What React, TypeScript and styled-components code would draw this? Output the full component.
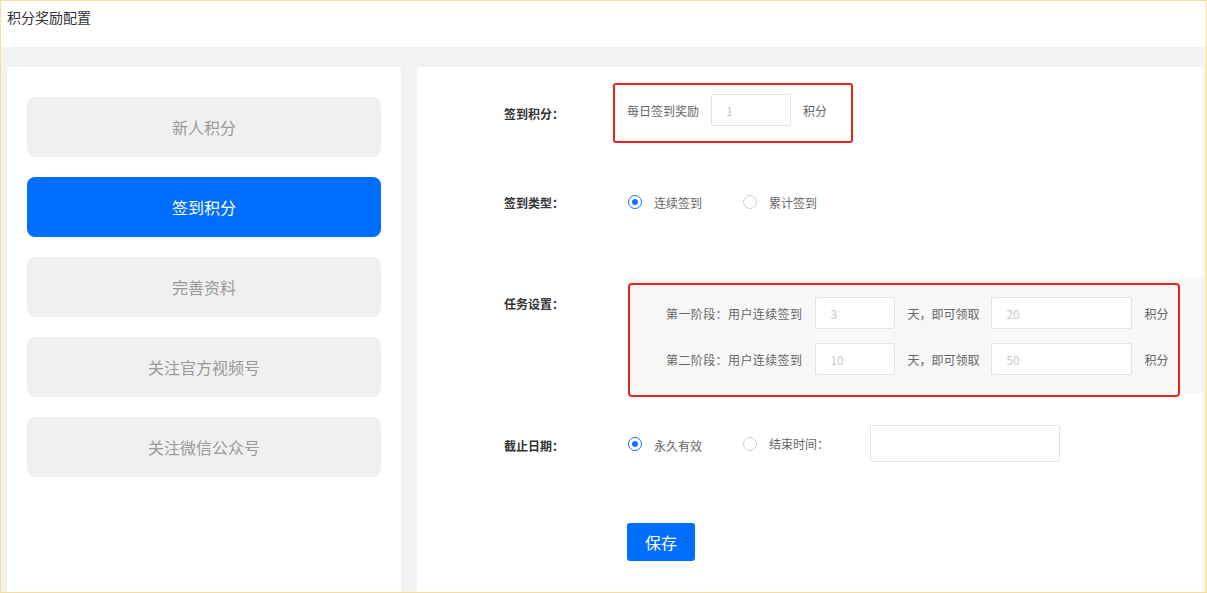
import React, { useState } from "react";
import styled, { createGlobalStyle } from "styled-components";

const GlobalStyle = createGlobalStyle`
  html, body {
    margin: 0;
    padding: 0;
    background: #fff;
  }
  * {
    box-sizing: border-box;
  }
  body {
    font-family: "Noto Sans CJK SC", "Noto Sans", "Liberation Sans", sans-serif;
  }
`;

const navItems = ["新人积分", "签到积分", "完善资料", "关注官方视频号", "关注微信公众号"];

const stages = [
  { name: "第一阶段", days: "3", points: "20" },
  { name: "第二阶段", days: "10", points: "50" },
];

function App() {
  const [active, setActive] = useState(1);
  const [signType, setSignType] = useState("continuous");
  const [deadline, setDeadline] = useState("forever");

  return (
    <Page>
      <GlobalStyle />
      <Header>积分奖励配置</Header>
      <Body>
        <SideCard>
          {navItems.map((item, i) => (
            <NavButton key={item} $active={i === active} onClick={() => setActive(i)}>
              {item}
            </NavButton>
          ))}
        </SideCard>

        <MainCard>
          <FormRow $top={16}>
            <Label>签到积分：</Label>
            <Highlight>
              <Text>每日签到奖励</Text>
              <Input $width={80} defaultValue="1" />
              <Text>积分</Text>
            </Highlight>
          </FormRow>

          <FormRow $top={29} $height={60}>
            <Label>签到类型：</Label>
            <RadioGroup>
              <RadioItem onClick={() => setSignType("continuous")}>
                <Radio $checked={signType === "continuous"} />
                <Text>连续签到</Text>
              </RadioItem>
              <RadioItem onClick={() => setSignType("total")}>
                <Radio $checked={signType === "total"} />
                <Text>累计签到</Text>
              </RadioItem>
            </RadioGroup>
          </FormRow>

          <FormRow $top={46} $align="flex-start">
            <Label $offset={17}>任务设置：</Label>
            <TaskBox>
              {stages.map((s) => (
                <StageRow key={s.name}>
                  <StageText>{s.name}：用户连续签到</StageText>
                  <Input $width={80} defaultValue={s.days} />
                  <Text>天，即可领取</Text>
                  <Input $width={141} defaultValue={s.points} />
                  <Text>积分</Text>
                </StageRow>
              ))}
              <Outline />
            </TaskBox>
          </FormRow>

          <FormRow $top={32}>
            <Label $offset={3}>截止日期：</Label>
            <RadioGroup>
              <RadioItem onClick={() => setDeadline("forever")}>
                <Radio $checked={deadline === "forever"} />
                <Text $nudge={2}>永久有效</Text>
              </RadioItem>
              <RadioItem $inputGap={29} onClick={() => setDeadline("end")}>
                <Radio $checked={deadline === "end"} />
                <Text>结束时间：</Text>
                <Input $width={190} $height={37} />
              </RadioItem>
            </RadioGroup>
          </FormRow>

          <FormRow $top={61}>
            <Label />
            <SaveButton>保存</SaveButton>
          </FormRow>
        </MainCard>
      </Body>
    </Page>
  );
}

export default App;

const Page = styled.div`
  width: 1207px;
  height: 593px;
  overflow: hidden;
  background: #f2f2f2;
  border: 1px solid #f7dc9d;
  display: flex;
  flex-direction: column;
`;

const Header = styled.div`
  height: 46px;
  flex-shrink: 0;
  background: #fff;
  padding: 6px 6px 0;
  font-size: 14px;
  line-height: 20px;
  color: #333;
`;

const Body = styled.div`
  flex: 1;
  display: grid;
  grid-template-columns: 394px 1fr;
  gap: 16px;
  padding: 20px 3px 0 6px;
  min-height: 0;
`;

const SideCard = styled.div`
  background: #fff;
  border-radius: 4px 4px 0 0;
  padding: 30px 20px;
  display: flex;
  flex-direction: column;
  gap: 20px;
  height: 560px;
`;

const NavButton = styled.div<{ $active?: boolean }>`
  height: 60px;
  border-radius: 8px;
  display: flex;
  align-items: center;
  justify-content: center;
  font-size: 16px;
  cursor: pointer;
  background: ${({ $active }) => ($active ? "#006eff" : "#f0f0f0")};
  color: ${({ $active }) => ($active ? "#fff" : "#999")};
`;

const MainCard = styled.div`
  background: #fff;
  border-radius: 4px 0 0 0;
  padding-left: 87px;
  display: flex;
  flex-direction: column;
  height: 560px;
`;

const FormRow = styled.div<{ $top?: number; $height?: number; $align?: string }>`
  display: flex;
  align-items: ${({ $align }) => $align || "center"};
  margin-top: ${({ $top }) => $top || 0}px;
  ${({ $height }) => ($height ? `height: ${$height}px;` : "")}
`;

const Label = styled.div<{ $offset?: number }>`
  width: 109px;
  flex-shrink: 0;
  font-size: 12px;
  font-weight: bold;
  color: #333;
  margin-top: ${({ $offset }) => $offset || 0}px;
`;

const Text = styled.span<{ $nudge?: number }>`
  font-size: 12px;
  color: #666;
  white-space: nowrap;
  ${({ $nudge }) => ($nudge ? `position: relative; top: ${$nudge}px;` : "")}
`;

const StageText = styled(Text)`
  letter-spacing: 0.4px;
  margin-right: 1px;
`;

const Highlight = styled.div`
  display: flex;
  align-items: center;
  gap: 12px;
  width: 240px;
  height: 60px;
  padding: 9px 12px 15px 12px;
  border: 2px solid #e8261f;
  border-radius: 3px;
`;

const Input = styled.input<{ $width: number; $height?: number }>`
  width: ${({ $width }) => $width}px;
  height: ${({ $height }) => $height || 32}px;
  border: 1px solid #e3e3e3;
  border-radius: 2px;
  background: #fff;
  padding: 0 14px;
  font-size: 12px;
  color: #c8c8c8;
  font-family: inherit;
  outline: none;
`;

const RadioGroup = styled.div`
  display: flex;
  align-items: center;
  gap: 41px;
  padding-left: 15px;
`;

const RadioItem = styled.label<{ $inputGap?: number }>`
  display: flex;
  align-items: center;
  gap: 12px;
  cursor: pointer;
  & > input {
    margin-left: ${({ $inputGap }) => $inputGap || 0}px;
  }
`;

const Radio = styled.span<{ $checked?: boolean }>`
  width: 14px;
  height: 14px;
  border-radius: 50%;
  border: 1px solid ${({ $checked }) => ($checked ? "#1a6dff" : "#cfcfcf")};
  background: #fff;
  display: flex;
  align-items: center;
  justify-content: center;
  &::after {
    content: "";
    width: 6px;
    height: 6px;
    border-radius: 50%;
    background: ${({ $checked }) => ($checked ? "#1a6dff" : "transparent")};
  }
`;

const TaskBox = styled.div`
  position: relative;
  margin-left: 15px;
  width: 575px;
  height: 115px;
  background: #f7f7f7;
  padding: 19px 0 0 38px;
  display: flex;
  flex-direction: column;
  gap: 14px;
`;

const StageRow = styled.div`
  display: flex;
  align-items: center;
  gap: 12px;
`;

const Outline = styled.div`
  position: absolute;
  top: 5px;
  left: 0;
  width: 552px;
  height: 114px;
  border: 2px solid #e8261f;
  border-radius: 4px;
  pointer-events: none;
`;

const SaveButton = styled.button`
  margin-left: 14px;
  width: 68px;
  height: 38px;
  border: none;
  border-radius: 3px;
  background: #006eff;
  color: #fff;
  font-size: 16px;
  font-family: inherit;
  cursor: pointer;
`;
